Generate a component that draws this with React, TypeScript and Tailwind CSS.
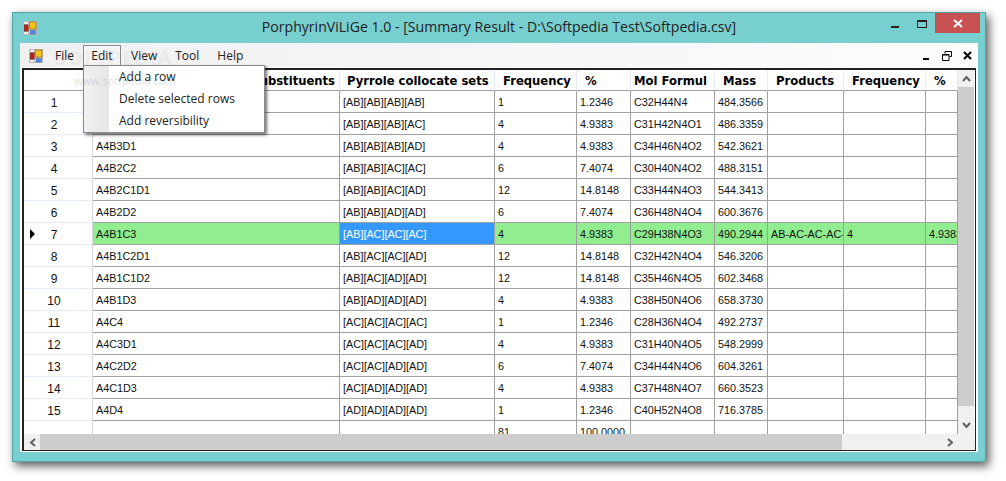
const rows = [
  ["A4B4", "[AB][AB][AB][AB]", "1", "1.2346", "C32H44N4", "484.3566"],
  ["A4B3C1", "[AB][AB][AB][AC]", "4", "4.9383", "C31H42N4O1", "486.3359"],
  ["A4B3D1", "[AB][AB][AB][AD]", "4", "4.9383", "C34H46N4O2", "542.3621"],
  ["A4B2C2", "[AB][AB][AC][AC]", "6", "7.4074", "C30H40N4O2", "488.3151"],
  ["A4B2C1D1", "[AB][AB][AC][AD]", "12", "14.8148", "C33H44N4O3", "544.3413"],
  ["A4B2D2", "[AB][AB][AD][AD]", "6", "7.4074", "C36H48N4O4", "600.3676"],
  ["A4B1C3", "[AB][AC][AC][AC]", "4", "4.9383", "C29H38N4O3", "490.2944", "AB-AC-AC-AC-", "4", "4.9383"],
  ["A4B1C2D1", "[AB][AC][AC][AD]", "12", "14.8148", "C32H42N4O4", "546.3206"],
  ["A4B1C1D2", "[AB][AC][AD][AD]", "12", "14.8148", "C35H46N4O5", "602.3468"],
  ["A4B1D3", "[AB][AD][AD][AD]", "4", "4.9383", "C38H50N4O6", "658.3730"],
  ["A4C4", "[AC][AC][AC][AC]", "1", "1.2346", "C28H36N4O4", "492.2737"],
  ["A4C3D1", "[AC][AC][AC][AD]", "4", "4.9383", "C31H40N4O5", "548.2999"],
  ["A4C2D2", "[AC][AC][AD][AD]", "6", "7.4074", "C34H44N4O6", "604.3261"],
  ["A4C1D3", "[AC][AD][AD][AD]", "4", "4.9383", "C37H48N4O7", "660.3523"],
  ["A4D4", "[AD][AD][AD][AD]", "1", "1.2346", "C40H52N4O8", "716.3785"],
  ["", "", "81", "100.0000", "", ""],
];

const headers = ["Substituents", "Pyrrole collocate sets", "Frequency", "%", "Mol Formul", "Mass", "Products", "Frequency", "%"];
const columns = "grid grid-cols-[69px_247px_155px_82px_54px_84px_53px_76px_82px_32px]";

function AppIcon() {
  return (
    <svg width="14" height="14" viewBox="0 0 14 14" className="shrink-0">
      <rect x="0.5" y="0.5" width="13" height="13" fill="#f2f0ec" stroke="#b8b8b8" />
      <path d="M5.500 0v14M0 3.500h6M0 10.500h6M6 8.500h8" stroke="#b8b8b8" />
      <rect x="6.500" y="1" width="6.500" height="7" fill="#f5c21a" stroke="#a57c14" strokeWidth="0.8" />
      <rect x="1.500" y="4" width="3.500" height="6" fill="#d01c14" stroke="#7c1a14" strokeWidth="0.8" />
      <rect x="7" y="9.500" width="5.500" height="3.500" fill="#4f8be0" stroke="#3f6db5" strokeWidth="0.6" />
    </svg>
  );
}

function Arrow({ d }: { d: string }) {
  return (
    <svg width="9" height="7" viewBox="0 0 9 7">
      <path d={d} fill="none" stroke="#606060" strokeWidth="2" />
    </svg>
  );
}

function Row({ index, row }: { index: number; row: string[] }) {
  const current = index === 6;
  return (
    <div className={`${columns} h-[22px] text-[10.8px] text-[#111]`}>
      <div className="relative flex items-center justify-center border-b border-r border-b-[#e3ecfa] border-r-[#d8d8d8] bg-white pt-[3px] pr-[8px] text-[12px]">
        {current && <span className="absolute left-[6px] top-[6px] h-0 w-0 border-y-[5px] border-l-[5px] border-y-transparent border-l-black" />}
        {index < 15 ? index + 1 : ""}
      </div>
      {[0, 1, 2, 3, 4, 5, 6, 7, 8].map((c) => (
        <div
          key={c}
          className={`flex items-center overflow-hidden whitespace-nowrap border-b border-r border-[#a0a0a0] pl-[3px] pt-[2px] ${
            current && c === 1 ? "bg-[#3399ff] text-white" : current ? "bg-[#90ee90]" : "bg-white"
          }`}
        >
          {row[c] || ""}
        </div>
      ))}
    </div>
  );
}

export default function App() {
  return (
    <div className="h-[481px] w-[1006px] overflow-hidden bg-white pl-[12px] pt-[12px] font-['Liberation_Sans',Arial,sans-serif]">
      <div className="flex h-[450px] w-[974px] flex-col border border-[#55a5a5] bg-[#78cfcf] shadow-[3px_4px_9px_rgba(0,0,0,0.65)]">
        <div className="flex h-[30px] shrink-0 items-center pl-[10px]">
          <AppIcon />
          <div className="flex-1 pb-[2px] pl-[70px] text-center font-['Open_Sans',sans-serif] text-[14.1px] text-[#222]">
            PorphyrinViLiGe 1.0 - [Summary Result - D:\Softpedia Test\Softpedia.csv]
          </div>
          <div className="flex h-[21px] items-start self-start">
            <span className="mr-[18px] mt-[13px] h-[2px] w-[8px] bg-[#222]" />
            <span className="mr-[8px] mt-[7px] h-[8px] w-[10px] border border-t-2 border-[#222]" />
            <span className="mr-[5px] flex h-[20px] w-[45px] items-center justify-center bg-[#c75050] text-white">
              <svg width="10" height="9" viewBox="0 0 10 9">
                <path d="M1 1l8 7M9 1L1 8" stroke="#fff" strokeWidth="2" />
              </svg>
            </span>
          </div>
        </div>

        <div className="mx-[7px] flex h-[409px] flex-col bg-white">
          <div className="relative flex h-[24px] shrink-0 items-center bg-gradient-to-r from-[#f0f0f0] to-[#fcfcfc] pl-[9px] pt-[1px] font-['Open_Sans',sans-serif] text-[12px] text-[#222]">
            <AppIcon />
            <span className="ml-[12px]">File</span>
            <span className="ml-[9px] flex h-[21px] w-[38px] items-center justify-center border border-b-0 border-[#8a8a8a] bg-[#f5f5f5]">Edit</span>
            <span className="ml-[10px]">View</span>
            <span className="ml-[18px]">Tool</span>
            <span className="ml-[18px]">Help</span>
            <div className="ml-auto flex items-center pr-[6px]">
              <span className="mr-[13px] mt-[7px] h-[2px] w-[6px] bg-black" />
              <svg width="10" height="10" viewBox="0 0 10 10" className="mr-[11px]">
                <path d="M3 2.500V.5h6.500v5H7.500M.5 3.500h6.500v6H.5zM.5 4h6.500" fill="none" stroke="#000" />
              </svg>
              <svg width="9" height="9" viewBox="0 0 9 9">
                <path d="M1 1l7 7M8 1L1 8" stroke="#000" strokeWidth="2" />
              </svg>
            </div>
            <div className="absolute left-[63px] top-[22px] z-20 flex h-[68px] w-[182px] border border-[#8a8a8a] bg-white shadow-[2px_2px_3px_rgba(0,0,0,0.55)]">
              <div className="w-[25px] bg-gradient-to-r from-[#f1f1f1] to-[#e6e6e6]" />
              <div className="flex flex-1 flex-col pl-[10px] text-[#222]">
                <span className="flex h-[22px] items-center">Add a row</span>
                <span className="flex h-[22px] items-center">Delete selected rows</span>
                <span className="flex h-[22px] items-center">Add reversibility</span>
              </div>
            </div>
            <span className="pointer-events-none absolute left-[35px] top-[0px] z-30 text-[20px] font-bold tracking-[1px] text-black/5">SOFTPEDIA</span>
            <span className="pointer-events-none absolute left-[54px] top-[30px] z-30 text-[11px] text-black/15">www.softpedia.com</span>
          </div>

          <div className="mx-[2px] mt-[1px] flex h-[383px] flex-col border-2 border-b-[1px] border-r-[1px] border-[#222] bg-white">
            <div className="flex min-h-0 flex-1">
              <div className="w-[934px] overflow-hidden">
                <div className={`${columns} h-[21px] font-['DejaVu_Sans',sans-serif] text-[11.6px] font-bold text-black`}>
                  <div className="border-b border-r border-b-[#a0a0a0] border-r-[#e3ecfa]" />
                  {headers.map((h, i) => (
                    <div
                      key={i}
                      className={`flex items-center overflow-hidden whitespace-nowrap border-b border-r border-b-[#a0a0a0] border-r-[#e3ecfa] pt-[4px] ${
                        i === 0 ? "justify-end pr-[4px]" : i === 1 ? "pl-[7px]" : i === 4 ? "pl-[3px]" : "pl-[8px]"
                      }`}
                    >
                      {h}
                    </div>
                  ))}
                </div>
                {rows.map((row, i) => (
                  <Row key={i} index={i} row={row} />
                ))}
              </div>
              <div className="flex w-[16px] flex-col bg-[#f0f0f0]">
                <div className="flex h-[17px] items-center justify-center">
                  <Arrow d="M1 6l3.500-4L8 6" />
                </div>
                <div className="h-[319px] bg-[#cdcdcd]" />
                <div className="mt-auto flex h-[17px] items-center justify-center">
                  <Arrow d="M1 1l3.500 4L8 1" />
                </div>
              </div>
            </div>
            <div className="flex h-[16px] shrink-0 items-center bg-[#f0f0f0]">
              <div className="flex h-full w-[16px] items-center justify-center">
                <svg width="7" height="9" viewBox="0 0 7 9">
                  <path d="M6 1L2 4.500 6 8" fill="none" stroke="#606060" strokeWidth="2" />
                </svg>
              </div>
              <div className="h-full w-[802px] bg-[#cdcdcd]" />
              <div className="ml-[100px] flex h-full w-[16px] items-center justify-center">
                <svg width="7" height="9" viewBox="0 0 7 9">
                  <path d="M1 1l4 3.500L1 8" fill="none" stroke="#606060" strokeWidth="2" />
                </svg>
              </div>
            </div>
          </div>
        </div>
      </div>
    </div>
  );
}
